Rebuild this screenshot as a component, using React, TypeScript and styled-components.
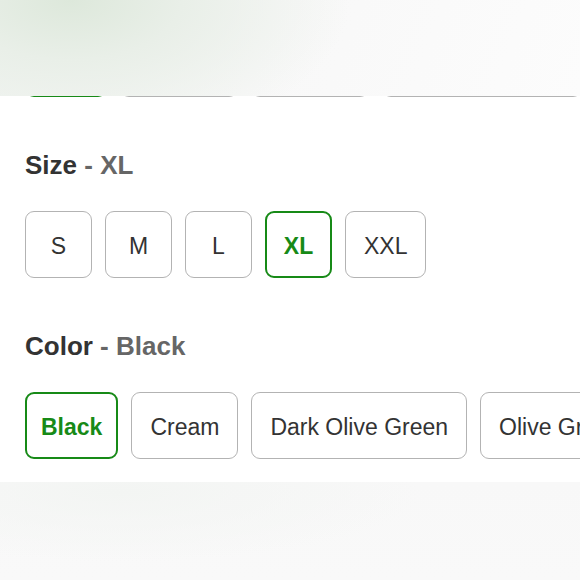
import React from 'react'
import styled, { createGlobalStyle } from 'styled-components'

const GlobalStyle = createGlobalStyle`
  html, body {
    margin: 0;
    padding: 0;
    background: #ffffff;
    font-family: 'Liberation Sans', Arial, Helvetica, sans-serif;
  }
`

const GREEN = '#178a17'

const Page = styled.div`
  position: relative;
  width: 580px;
  height: 580px;
  overflow: hidden;
  display: flex;
  flex-direction: column;
  background: #fff;
`

// frosted header lying over the scrolled list
const BlurHeader = styled.div`
  position: absolute;
  top: 0;
  left: 0;
  right: 0;
  height: 96px;
  z-index: 2;
  background:
    radial-gradient(ellipse 280px 150px at 70px 0px, #dde8db 0%, #e9efe8 40%, rgba(247, 248, 247, 0) 100%),
    linear-gradient(110deg, #f3f5f3 0%, #f8f8f8 45%, #fcfcfc 100%);
`

const Content = styled.div`
  padding: 30px 0 23px 25px;
  background: #fff;
`

const Section = styled.section<{ $top: number }>`
  margin-top: ${(p) => p.$top}px;
`

const Heading = styled.h2`
  margin: 0 0 30px;
  font-size: 26px;
  line-height: 32px;
  font-weight: 700;
  color: #333;
`

const Value = styled.span`
  color: #666;
`

const OptionRow = styled.div`
  display: flex;
  gap: 13px;
  overflow: hidden;
  white-space: nowrap;
`

const Option = styled.button<{ $selected?: boolean; $width?: number }>`
  flex-shrink: 0;
  box-sizing: border-box;
  height: 67px;
  min-width: 67px;
  ${(p) => (p.$width ? `width: ${p.$width}px;` : '')}
  padding: 3px ${(p) => (p.$selected ? 14 : 18)}px 0;
  border-radius: 9px;
  border: ${(p) => (p.$selected ? `2px solid ${GREEN}` : '1px solid #b3b3b3')};
  background: #fff;
  font-family: 'Liberation Sans', Arial, Helvetica, sans-serif;
  font-size: 23px;
  font-weight: ${(p) => (p.$selected ? 700 : 400)};
  color: ${(p) => (p.$selected ? GREEN : '#333')};
  display: flex;
  align-items: center;
  justify-content: center;
  cursor: pointer;
`

const Footer = styled.div`
  flex: 1;
  background:
    radial-gradient(ellipse 300px 70px at 120px 10px, #f3f5f3 0%, rgba(248, 248, 248, 0) 100%),
    linear-gradient(180deg, #f8f8f8 0%, #f9f9f9 100%);
`

const materials = [
  { label: 'Cotton', width: 82 },
  { label: 'Polyester', width: 118 },
  { label: 'Linen', width: 118 },
  { label: 'Cotton Blend', width: 200 },
]
const sizes = ['S', 'M', 'L', 'XL', 'XXL']
const colors = ['Black', 'Cream', 'Dark Olive Green', 'Olive Green']

export default function App() {
  const size = 'XL'
  const color = 'Black'

  return (
    <Page>
      <GlobalStyle />
      <BlurHeader />
      <Content>
        <OptionRow>
          {materials.map((m, i) => (
            <Option key={m.label} $selected={i === 0} $width={m.width}>
              {m.label}
            </Option>
          ))}
        </OptionRow>

        <Section $top={52}>
          <Heading>
            Size <Value>- {size}</Value>
          </Heading>
          <OptionRow>
            {sizes.map((s) => (
              <Option key={s} $selected={s === size}>
                {s}
              </Option>
            ))}
          </OptionRow>
        </Section>

        <Section $top={52}>
          <Heading>
            Color <Value>- {color}</Value>
          </Heading>
          <OptionRow>
            {colors.map((c) => (
              <Option key={c} $selected={c === color}>
                {c}
              </Option>
            ))}
          </OptionRow>
        </Section>
      </Content>
      <Footer />
    </Page>
  )
}
